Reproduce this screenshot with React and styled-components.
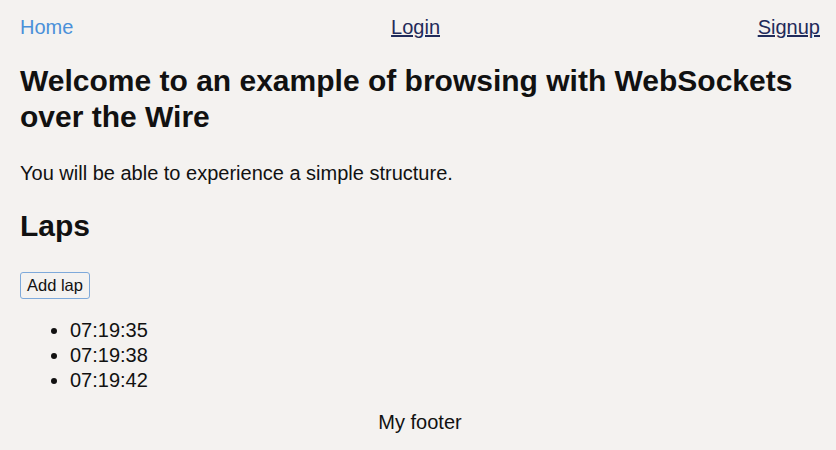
import React from 'react';
import styled, { createGlobalStyle } from 'styled-components';

const GlobalStyle = createGlobalStyle`
  html, body {
    margin: 0;
    padding: 0;
    background-color: #f4f2f0;
  }
  body {
    font-family: "Liberation Sans", Arial, sans-serif;
    font-size: 20px;
    color: #111;
  }
`;

const Page = styled.div`
  padding: 14px 16px 0 20px;
  display: flex;
  flex-direction: column;
`;

const Nav = styled.nav`
  display: flex;
  justify-content: space-between;
  align-items: center;
  line-height: 26px;
`;

const NavLink = styled.a`
  color: ${(p) => (p.$active ? '#4a90d9' : '#1f2a5a')};
  text-decoration: ${(p) => (p.$active ? 'none' : 'underline')};
  cursor: pointer;
`;

const Title = styled.h1`
  font-size: 30px;
  line-height: 36px;
  margin: 23px 0 0;
`;

const Intro = styled.p`
  margin: 25px 0 0;
  line-height: 26px;
`;

const SubTitle = styled.h2`
  font-size: 30px;
  line-height: 34px;
  margin: 23px 0 0;
`;

const AddButton = styled.button`
  align-self: flex-start;
  margin-top: 29px;
  font-family: "Liberation Sans", Arial, sans-serif;
  font-size: 16.5px;
  padding: 3px 6px;
  background: transparent;
  border: 1px solid #7ea9da;
  border-radius: 3px;
  color: #111;
  cursor: pointer;
`;

const LapList = styled.ul`
  margin: 19px 0 0;
  padding-left: 50px;
  line-height: 25px;
`;

const Footer = styled.footer`
  text-align: center;
  margin-top: 16px;
  line-height: 26px;
`;

const laps = ['07:19:35', '07:19:38', '07:19:42'];

function App() {
  return (
    <>
      <GlobalStyle />
      <Page>
        <Nav>
          <NavLink $active href="#">Home</NavLink>
          <NavLink href="#">Login</NavLink>
          <NavLink href="#">Signup</NavLink>
        </Nav>
        <Title>Welcome to an example of browsing with WebSockets over the Wire</Title>
        <Intro>You will be able to experience a simple structure.</Intro>
        <SubTitle>Laps</SubTitle>
        <AddButton>Add lap</AddButton>
        <LapList>
          {laps.map((lap) => (
            <li key={lap}>{lap}</li>
          ))}
        </LapList>
        <Footer>My footer</Footer>
      </Page>
    </>
  );
}

export default App;
